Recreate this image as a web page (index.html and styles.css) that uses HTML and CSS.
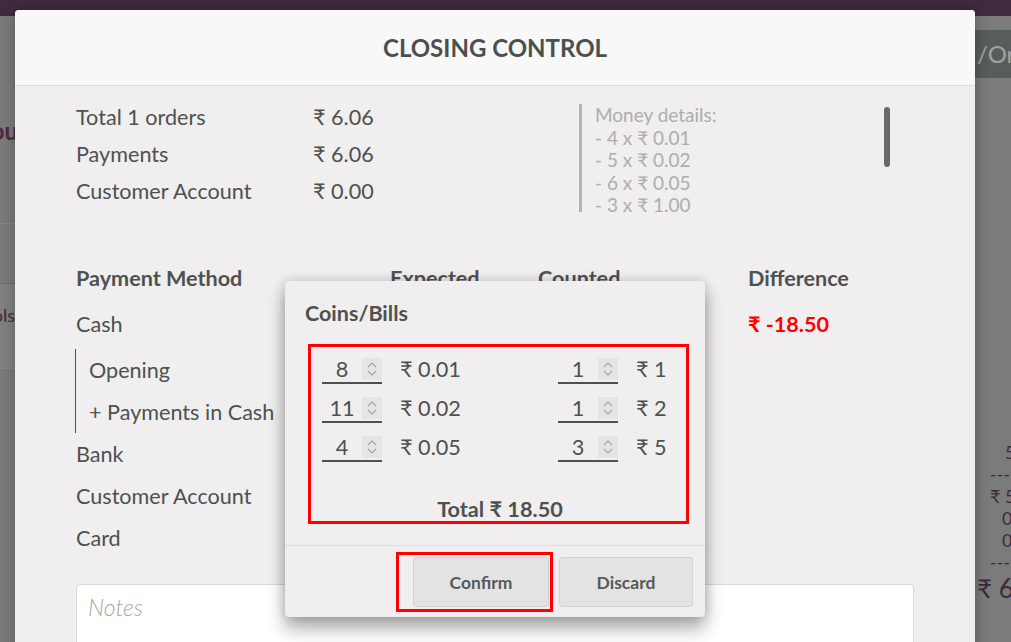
FILE: index.html
```html
<!DOCTYPE html>
<html>
<head>
	<meta charset="utf-8">
	<meta name="viewport" content="width=device-width, initial-scale=1">
	<title>Closing Control</title>
<link rel="stylesheet" href="styles.css">
</head>
<body>
<div class="app">
    <div class="topbar"></div>
    <div class="app-body">
        <div class="left-pane">
            <div class="lp-block"><span class="lp-title">You</span></div>
            <div class="lp-line"></div>
            <div class="lp-block lp-small"><span>Tools:</span></div>
        </div>
        <div class="center-pane"></div>
        <div class="right-pane">
            <div class="rp-button">/Or</div>
            <div class="receipt">
                <div class="r5">5</div>
                <div class="r3">----</div>
                <div class="r3">₹ 5</div>
                <div class="r4">0</div>
                <div class="r4">0</div>
                <div class="r3">----</div>
                <div class="rbig">₹ 6</div>
            </div>
        </div>
    </div>
</div>

<div class="modal">
    <div class="modal-head">CLOSING CONTROL</div>
    <div class="modal-body">
        <div class="summary">
            <div class="totals">
                <div class="trow"><span class="tlabel">Total 1 orders</span><span class="tval">₹ 6.06</span></div>
                <div class="trow"><span class="tlabel">Payments</span><span class="tval">₹ 6.06</span></div>
                <div class="trow"><span class="tlabel">Customer Account</span><span class="tval">₹ 0.00</span></div>
            </div>
            <div class="details-wrap">
                <div class="money-details">
                    <div>Money details:</div>
                    <div>- 4 x ₹ 0.01</div>
                    <div>- 5 x ₹ 0.02</div>
                    <div>- 6 x ₹ 0.05</div>
                    <div>- 3 x ₹ 1.00</div>
                    <div>- 1 x ₹ 2.00</div>
                    <div>- 2 x ₹ 5.00</div>
                </div>
                <div class="scrollbar"><div class="thumb"></div></div>
            </div>
        </div>

        <div class="pm-table">
            <div class="pm-row pm-head">
                <span>Payment Method</span><span>Expected</span><span>Counted</span><span>Difference</span>
            </div>
            <div class="pm-row pm-cash">
                <span>Cash</span><span>₹ 0.00</span><span></span><span class="neg">₹ -18.50</span>
            </div>
            <div class="pm-sub">
                <div class="pm-row"><span>Opening</span><span>₹ 0.00</span><span></span><span></span></div>
                <div class="pm-row"><span>+ Payments in Cash</span><span>₹ 0.00</span><span></span><span></span></div>
            </div>
            <div class="pm-row"><span>Bank</span><span>₹ 6.06</span><span></span><span></span></div>
            <div class="pm-row"><span>Customer Account</span><span>₹ 0.00</span><span></span><span></span></div>
            <div class="pm-row"><span>Card</span><span>₹ 0.00</span><span></span><span></span></div>
        </div>

        <div class="notes">Notes</div>
    </div>

    <div class="popup">
        <div class="popup-title">Coins/Bills</div>
        <div class="coin-box">
            <div class="coin-grid">
                <div class="coin">
                    <div class="qty"><span class="val">8</span><span class="spin"><svg width="12" height="20" viewBox="0 0 12 20"><path d="M2 8 L6 4 L10 8 M2 12 L6 16 L10 12" fill="none" stroke="#a3a3a3" stroke-width="1.1"/></svg></span></div>
                    <span class="coin-label">₹ 0.01</span>
                </div>
                <div class="coin">
                    <div class="qty"><span class="val">1</span><span class="spin"><svg width="12" height="20" viewBox="0 0 12 20"><path d="M2 8 L6 4 L10 8 M2 12 L6 16 L10 12" fill="none" stroke="#a3a3a3" stroke-width="1.1"/></svg></span></div>
                    <span class="coin-label">₹ 1</span>
                </div>
                <div class="coin">
                    <div class="qty"><span class="val">11</span><span class="spin"><svg width="12" height="20" viewBox="0 0 12 20"><path d="M2 8 L6 4 L10 8 M2 12 L6 16 L10 12" fill="none" stroke="#a3a3a3" stroke-width="1.1"/></svg></span></div>
                    <span class="coin-label">₹ 0.02</span>
                </div>
                <div class="coin">
                    <div class="qty"><span class="val">1</span><span class="spin"><svg width="12" height="20" viewBox="0 0 12 20"><path d="M2 8 L6 4 L10 8 M2 12 L6 16 L10 12" fill="none" stroke="#a3a3a3" stroke-width="1.1"/></svg></span></div>
                    <span class="coin-label">₹ 2</span>
                </div>
                <div class="coin">
                    <div class="qty"><span class="val">4</span><span class="spin"><svg width="12" height="20" viewBox="0 0 12 20"><path d="M2 8 L6 4 L10 8 M2 12 L6 16 L10 12" fill="none" stroke="#a3a3a3" stroke-width="1.1"/></svg></span></div>
                    <span class="coin-label">₹ 0.05</span>
                </div>
                <div class="coin">
                    <div class="qty"><span class="val">3</span><span class="spin"><svg width="12" height="20" viewBox="0 0 12 20"><path d="M2 8 L6 4 L10 8 M2 12 L6 16 L10 12" fill="none" stroke="#a3a3a3" stroke-width="1.1"/></svg></span></div>
                    <span class="coin-label">₹ 5</span>
                </div>
            </div>
            <div class="coin-total">Total ₹ 18.50</div>
        </div>
        <div class="popup-footer">
            <button class="btn btn-confirm">Confirm</button>
            <button class="btn btn-discard">Discard</button>
        </div>
        <div class="mark"></div>
    </div>
</div>
</body>
</html>
```

FILE: styles.css
```css
*{
    box-sizing: border-box;
}
body{
    margin: 0;
    width: 1011px;
    height: 642px;
    overflow: hidden;
    position: relative;
    font-family: Lato, "Open Sans", "DejaVu Sans", sans-serif;
    color: #4d5250;
    background: #7b7b7b;
}

/* page behind the dialog */
.app{
    height: 642px;
    display: flex;
    flex-direction: column;
}
.topbar{
    height: 16px;
    background: #412a3f;
}
.app-body{
    flex: 1;
    display: flex;
}
.left-pane{
    width: 15px;
    overflow: hidden;
    display: flex;
    flex-direction: column;
    direction: rtl;
}
.lp-block{
    height: 208px;
    padding-top: 100px;
    white-space: nowrap;
    border-bottom: 1px solid #868686;
}
.lp-title{
    font-size: 24px;
    font-weight: 700;
    color: #4a2b44;
    margin-right: -3px;
}
.lp-line{
    height: 60px;
    border-bottom: 1px solid #6f6f6f;
}
.lp-small{
    height: 85px;
    padding-top: 20px;
    font-size: 18px;
    color: #3f2a3d;
    background: #808080;
}
.center-pane{
    flex: 1;
}
.right-pane{
    width: 36px;
    overflow: hidden;
    white-space: nowrap;
}
.rp-button{
    margin-top: 14px;
    height: 48px;
    line-height: 48px;
    background: #575d5b;
    color: #a2a2a2;
    font-size: 24px;
    padding-left: 2px;
}
.receipt{
    margin-top: 363px;
    color: #3d2a3b;
    font-size: 18px;
    line-height: 22px;
}
.r5{ padding-left: 30px; }
.r4{ padding-left: 27px; }
.r3{ padding-left: 15px; }
.rbig{
    font-size: 26px;
    line-height: 30px;
    padding-left: 2px;
}

/* dialog */
.modal{
    position: absolute;
    left: 15px;
    top: 10px;
    width: 960px;
    height: 660px;
    background: #f0eeee;
    border-radius: 4px;
    box-shadow: 0 0 14px rgba(0, 0, 0, 0.3);
}
.modal-head{
    height: 76px;
    line-height: 75px;
    text-align: center;
    font-size: 24px;
    font-weight: 700;
    color: #4a504e;
    background: #f8f8f8;
    border-bottom: 1px solid #dedede;
    border-radius: 4px 4px 0 0;
}
.modal-body{
    padding: 13px 61px 0;
}
.summary{
    display: flex;
    height: 113px;
}
.totals{
    width: 503px;
    font-size: 21.6px;
}
.trow{
    display: flex;
    height: 37px;
    line-height: 37px;
}
.tlabel{
    width: 237px;
}
.details-wrap{
    margin-top: 5px;
    width: 314px;
    height: 108px;
    display: flex;
}
.money-details{
    flex: 1;
    overflow: hidden;
    border-left: 3px solid #b2b2b2;
    padding-left: 13px;
    color: #adadad;
    font-size: 19px;
    line-height: 22.5px;
}
.scrollbar{
    width: 6px;
    margin-right: 3px;
    padding-top: 3px;
}
.thumb{
    height: 60px;
    background: #696969;
    border-radius: 3px;
}

.pm-table{
    margin-top: 45px;
    font-size: 21.6px;
}
.pm-row{
    display: grid;
    grid-template-columns: 314px 148px 210px 1fr;
    height: 42px;
    line-height: 42px;
}
.pm-head{
    font-weight: 700;
}
.pm-cash{
    margin: 4px 0;
}
.neg{
    color: #ff0000;
    font-weight: 700;
}
.pm-sub{
    border-left: 1px solid #4d5250;
    margin-left: -1px;
    padding-left: 13px;
}
.pm-sub .pm-row{
    grid-template-columns: 301px 148px 210px 1fr;
}
.notes{
    margin-top: 25px;
    height: 120px;
    background: #ffffff;
    border: 1px solid #d8d8d8;
    border-radius: 4px;
    padding: 10px 11px;
    line-height: 24px;
    font-size: 23px;
    font-style: italic;
    font-weight: 300;
    color: #a6a6a6;
}

/* coins popup */
.popup{
    position: absolute;
    left: 270px;
    top: 271px;
    width: 420px;
    height: 336px;
    background: #f0eeee;
    border-radius: 4px;
    box-shadow: 0 12px 18px rgba(0, 0, 0, 0.32), 0 0 12px rgba(0, 0, 0, 0.18);
    display: flex;
    flex-direction: column;
}
.popup-title{
    padding: 20px 20px 0;
    font-size: 21.5px;
    font-weight: 700;
    line-height: 24px;
}
.coin-box{
    margin: 19px 16px 0 23px;
    height: 180px;
    border: 3px solid #ff0000;
    padding: 7px 0 0 11px;
    display: flex;
    flex-direction: column;
}
.coin-grid{
    display: grid;
    grid-template-columns: 236px 1fr;
    row-gap: 9px;
}
.coin{
    display: flex;
    align-items: center;
    height: 30px;
    font-size: 21.7px;
}
.qty{
    width: 60px;
    height: 30px;
    display: flex;
    align-items: flex-start;
    border-bottom: 2px solid #4d5250;
}
.val{
    flex: 1;
    text-align: center;
    line-height: 30px;
}
.spin{
    width: 20px;
    height: 22px;
    margin-top: 4px;
    background: #e6e4e4;
    display: flex;
    align-items: center;
    justify-content: center;
}
.coin-label{
    margin-left: 18px;
}
.coin-total{
    margin-top: auto;
    text-align: center;
    font-size: 21.7px;
    font-weight: 700;
    line-height: 24px;
    padding-right: 8px;
}
.popup-footer{
    margin-top: 21px;
    border-top: 1px solid #dcdcdc;
    padding: 11px 12px 0;
    display: flex;
    justify-content: flex-end;
    gap: 10px;
}
.btn{
    height: 50px;
    background: #e4e3e3;
    border: 1px solid #d3d3d3;
    border-radius: 3px;
    font-family: Lato, "Open Sans", sans-serif;
    font-size: 17.5px;
    font-weight: 700;
    color: #555a58;
}
.btn-confirm{
    width: 136px;
}
.btn-discard{
    width: 134px;
}
.mark{
    position: absolute;
    left: 111px;
    top: 271px;
    width: 157px;
    height: 60px;
    border: 3px solid #ff0000;
}
```
